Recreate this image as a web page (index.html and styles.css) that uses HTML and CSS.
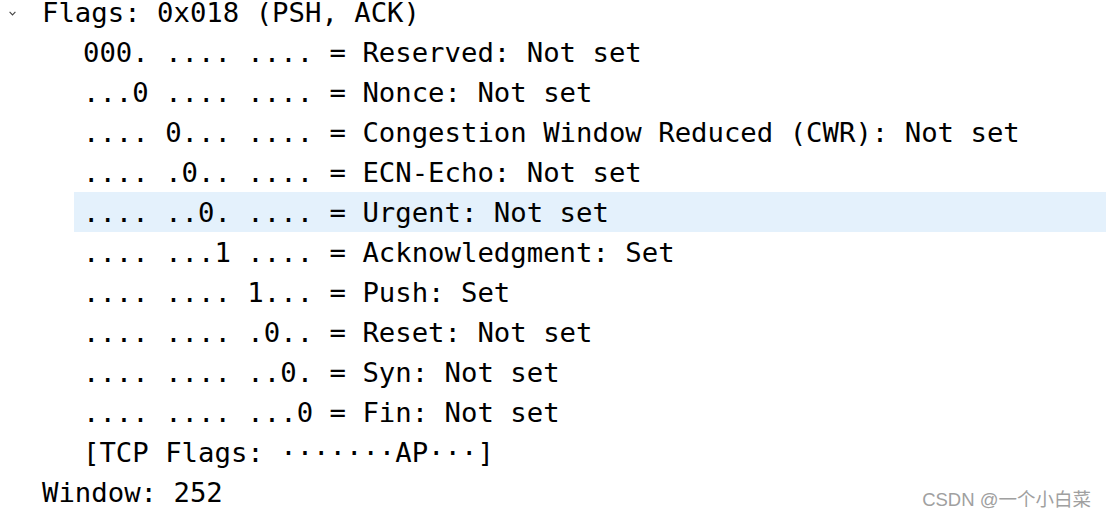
FILE: index.html
```html
<!DOCTYPE html>
<html>
<head>
<meta charset="utf-8">
<link rel="stylesheet" href="styles.css">
</head>
<body>
<div class="tree">
  <div class="row top"><svg class="chev" width="7" height="5" viewBox="0 0 7 5"><path d="M0.6 0.8 L3.5 3.9 L6.4 0.8" fill="none" stroke="#444" stroke-width="1.1"/></svg><span>Flags: 0x018 (PSH, ACK)</span></div>
  <div class="children">
    <div class="row child">000. .... .... = Reserved: Not set</div>
    <div class="row child">...0 .... .... = Nonce: Not set</div>
    <div class="row child">.... 0... .... = Congestion Window Reduced (CWR): Not set</div>
    <div class="row child">.... .0.. .... = ECN-Echo: Not set</div>
    <div class="row child selected">.... ..0. .... = Urgent: Not set</div>
    <div class="row child">.... ...1 .... = Acknowledgment: Set</div>
    <div class="row child">.... .... 1... = Push: Set</div>
    <div class="row child">.... .... .0.. = Reset: Not set</div>
    <div class="row child">.... .... ..0. = Syn: Not set</div>
    <div class="row child">.... .... ...0 = Fin: Not set</div>
    <div class="row child">[TCP Flags: ·······AP···]</div>
  </div>
  <div class="row plain">Window: 252</div>
</div>
<div class="watermark">CSDN @一个小白菜</div>
</body>
</html>
```
FILE: styles.css
```css
html, body {
  margin: 0;
  padding: 0;
  background: #ffffff;
  width: 1106px;
  height: 516px;
  overflow: hidden;
}
.tree {
  margin-top: -8px;
  font-family: "DejaVu Sans Mono", "Liberation Mono", monospace;
  font-size: 27.3px;
  color: #000;
}
.row {
  height: 40px;
  display: flex;
  align-items: center;
  white-space: pre;
}
.top {
  padding-left: 9px;
}
.chev {
  width: 7px;
  height: 5px;
  margin-right: 26px;
  margin-top: 3px;
}
.children {
  margin-left: 74px;
}
.child {
  padding-left: 9px;
}
.selected {
  background: #e4f1fc;
}
.plain {
  padding-left: 42px;
}
.watermark {
  position: absolute;
  right: 15px;
  top: 485px;
  font-family: "Liberation Sans", "Noto Sans CJK SC", sans-serif;
  font-size: 18.5px;
  color: #a0a0a0;
}
```
